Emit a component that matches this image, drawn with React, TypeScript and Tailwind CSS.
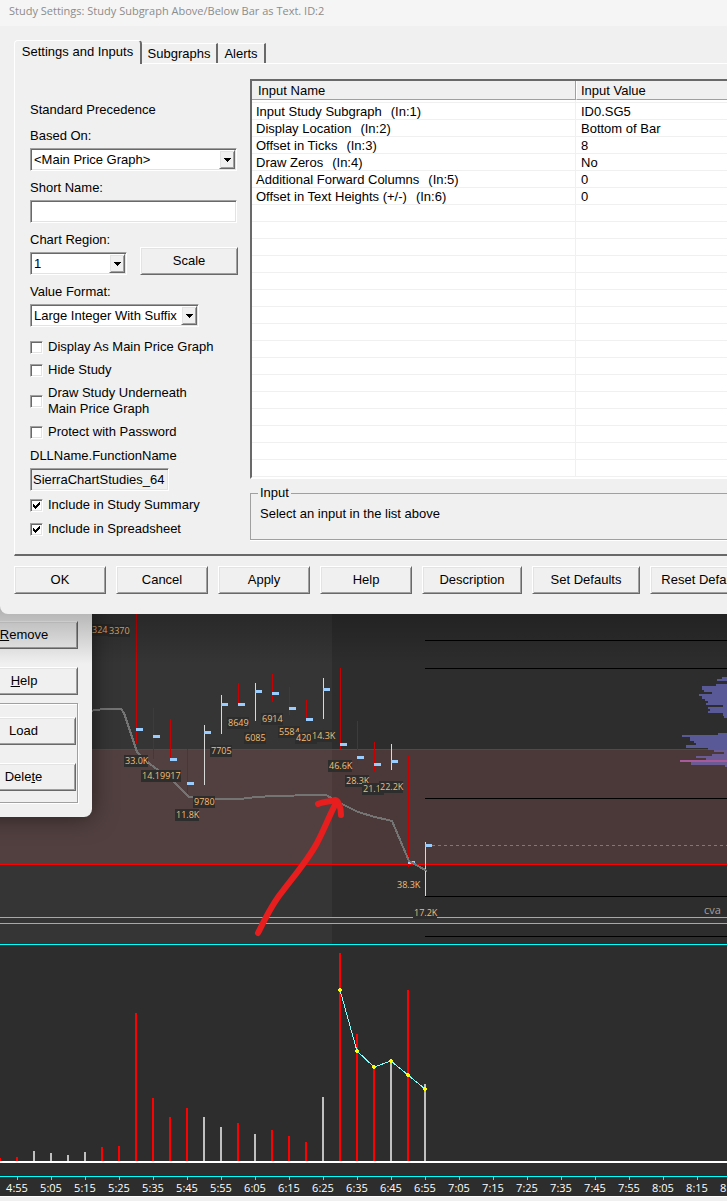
import { useState } from "react";
import type { ReactNode } from "react";

// --- Shared bevel styles ---
const RAISED =
  "border border-t-white border-l-white border-r-[#696969] border-b-[#696969] bg-[#f0f0f0] shadow-[inset_1px_1px_0_#e3e3e3,inset_-1px_-1px_0_#a0a0a0]";
const SUNKEN =
  "border border-t-[#a0a0a0] border-l-[#a0a0a0] border-r-white border-b-white shadow-[inset_1px_1px_0_#696969,inset_-1px_-1px_0_#e3e3e3]";

const INPUT_ROWS = [
  { name: "Input Study Subgraph", id: "(In:1)", value: "ID0.SG5" },
  { name: "Display Location", id: "(In:2)", value: "Bottom of Bar" },
  { name: "Offset in Ticks", id: "(In:3)", value: "8" },
  { name: "Draw Zeros", id: "(In:4)", value: "No" },
  { name: "Additional Forward Columns", id: "(In:5)", value: "0" },
  { name: "Offset in Text Heights (+/-)", id: "(In:6)", value: "0" },
];
const EMPTY_ROWS = 16;

// --- Chart data ---
const BAR_STEP = 17;
const RED = "#c80000";
const WHITE = "#d8d8d8";

type PriceBar = { x: number; high: number; low: number; close: number; up?: boolean };

const PRICE_BARS: PriceBar[] = [
  { x: 136, high: 0, low: 144, close: 129 },
  { x: 153, high: 108, low: 159, close: 136 },
  { x: 170, high: 119, low: 158, close: 159 },
  { x: 187, high: 149, low: 194, close: 183 },
  { x: 204, high: 125, low: 185, close: 132, up: true },
  { x: 221, high: 95, low: 134, close: 104, up: true },
  { x: 238, high: 83, low: 104, close: 104 },
  { x: 255, high: 83, low: 121, close: 91, up: true },
  { x: 272, high: 74, low: 102, close: 93 },
  { x: 289, high: 87, low: 115, close: 108 },
  { x: 306, high: 100, low: 119, close: 119 },
  { x: 323, high: 78, low: 119, close: 89, up: true },
  { x: 340, high: 68, low: 149, close: 144 },
  { x: 357, high: 121, low: 164, close: 157 },
  { x: 374, high: 142, low: 172, close: 164 },
  { x: 391, high: 144, low: 170, close: 161, up: true },
  { x: 408, high: 155, low: 267, close: 262 },
  { x: 425, high: 242, low: 296, close: 245, up: true },
];

const PRICE_LABELS = [
  { x: 91, y: 30, text: "324" },
  { x: 108, y: 31, text: "3370" },
  { x: 124, y: 161, text: "33.0K" },
  { x: 141, y: 176, text: "14.1" },
  { x: 159, y: 176, text: "9917" },
  { x: 175, y: 215, text: "11.8K" },
  { x: 193, y: 202, text: "9780" },
  { x: 210, y: 151, text: "7705" },
  { x: 227, y: 123, text: "8649" },
  { x: 244, y: 138, text: "6085" },
  { x: 261, y: 119, text: "6914" },
  { x: 278, y: 132, text: "5584" },
  { x: 295, y: 138, text: "420" },
  { x: 311, y: 136, text: "14.3K" },
  { x: 328, y: 166, text: "46.6K" },
  { x: 345, y: 181, text: "28.3K" },
  { x: 362, y: 189, text: "21.1" },
  { x: 379, y: 187, text: "22.2K" },
  { x: 396, y: 285, text: "38.3K" },
  { x: 413, y: 313, text: "17.2K" },
];

// [y, height, width] measured from the right edge
const PROFILE = [
  [77, 2, 5], [79, 2, 10], [84, 2, 11], [86, 4, 25], [90, 2, 23], [92, 2, 15],
  [94, 2, 28], [96, 3, 25], [99, 2, 22], [101, 2, 19], [103, 2, 21], [105, 2, 4],
  [107, 2, 19], [109, 2, 17], [111, 2, 19], [113, 3, 4], [116, 2, 3],
  [133, 2, 9], [135, 2, 45], [137, 4, 37], [141, 2, 33], [143, 2, 31], [145, 3, 41],
  [148, 2, 19], [150, 2, 13], [152, 2, 3], [154, 2, 15], [156, 2, 31], [158, 2, 21],
  [162, 3, 36], [165, 2, 2],
];

// [top, rising] for every bar, starting at x = 0
const VOLUME: [number, boolean][] = [
  [213, false], [212, false], [206, true], [208, true], [210, true], [207, true],
  [202, false], [201, false], [68, false], [153, false], [172, false], [163, false],
  [172, true], [182, true], [178, false], [189, true], [185, false], [191, false],
  [197, false], [152, true], [8, false], [89, false], [122, false], [116, true],
  [45, false], [139, true],
];
const VOLUME_AVG = [[340, 45], [357, 106], [374, 122], [391, 116], [408, 130], [425, 144]];

const TIMES = Array.from({ length: 22 }, (_, i) => {
  const minutes = 4 * 60 + 55 + i * 10;
  return `${Math.floor(minutes / 60)}:${String(minutes % 60).padStart(2, "0")}`;
});

// --- Controls ---
function Button({ children, className = "w-[92px]" }: { children: ReactNode; className?: string }) {
  return (
    <button type="button" className={`h-7 shrink-0 whitespace-nowrap text-center ${RAISED} ${className}`}>
      {children}
    </button>
  );
}

function Select({ id, label, value, className }: { id: string; label: string; value: string; className: string }) {
  return (
    <div>
      <label htmlFor={id} className="mb-1 block">{label}</label>
      <div className={`relative h-[23px] ${className}`}>
        <select id={id} defaultValue={value} className={`h-full w-full appearance-none bg-white pl-[3px] ${SUNKEN}`}>
          <option>{value}</option>
        </select>
        <span className={`pointer-events-none absolute inset-y-[2px] right-[2px] flex w-4 items-center justify-center ${RAISED}`}>
          <svg width="7" height="4" shapeRendering="crispEdges"><path d="M0 0H7V1H6V2H5V3H4V4H3V3H2V2H1V1H0Z" /></svg>
        </span>
      </div>
    </div>
  );
}

function Checkbox({ label, initial = false }: { label: ReactNode; initial?: boolean }) {
  const [checked, setChecked] = useState(initial);
  return (
    <label className="flex items-center gap-[5px]">
      <span className="relative size-[13px] shrink-0">
        <input
          type="checkbox"
          checked={checked}
          onChange={(e) => setChecked(e.target.checked)}
          className={`block size-full appearance-none bg-white ${SUNKEN}`}
        />
        {checked && (
          <svg className="pointer-events-none absolute inset-0" width="13" height="13" shapeRendering="crispEdges">
            <path d="M3 5H4V6H5V7H6V6H7V5H8V4H9V3H10V6H9V7H8V8H7V9H6V10H5V9H4V8H3Z" />
          </svg>
        )}
      </span>
      <span>{label}</span>
    </label>
  );
}

// --- Dialog ---
function Tabs() {
  const idle = "h-5 border-t border-r-2 border-t-white border-r-[#696969] text-center";
  return (
    <div role="tablist" className="relative z-10 -mb-px ml-[14px] flex items-end">
      <button type="button" role="tab" aria-selected="true" className="h-6 w-32 rounded-t-sm border-t border-r-2 border-l border-t-white border-l-white border-r-[#696969] bg-[#f0f0f0] pb-[2px]">
        Settings and Inputs
      </button>
      <button type="button" role="tab" aria-selected="false" className={`mb-px w-[76px] ${idle}`}>Subgraphs</button>
      <button type="button" role="tab" aria-selected="false" className={`mb-px w-12 ${idle}`}>Alerts</button>
    </div>
  );
}

function SettingsForm() {
  return (
    <div className="w-[235px] shrink-0 pt-[38px] pb-[17px] pl-[15px]">
      <p className="mb-[10px]">Standard Precedence</p>
      <div className="flex flex-col gap-[9px]">
        <Select id="based-on" label="Based On:" value="<Main Price Graph>" className="w-[207px]" />
        <div>
          <label htmlFor="short-name" className="mb-1 block">Short Name:</label>
          <input id="short-name" className={`block h-[23px] w-[207px] bg-white px-1 ${SUNKEN}`} />
        </div>
        <div className="flex items-end gap-[13px]">
          <Select id="region" label="Chart Region:" value="1" className="w-[97px]" />
          <Button className="w-[98px]">Scale</Button>
        </div>
        <Select id="format" label="Value Format:" value="Large Integer With Suffix" className="w-[169px]" />
      </div>
      <div className="mt-3 flex flex-col gap-[7px]">
        <Checkbox label="Display As Main Price Graph" />
        <Checkbox label="Hide Study" />
        <Checkbox label={<>Draw Study Underneath<br />Main Price Graph</>} />
        <Checkbox label="Protect with Password" />
      </div>
      <label htmlFor="dll" className="mt-2 mb-1 block">DLLName.FunctionName</label>
      <input id="dll" readOnly defaultValue="SierraChartStudies_64" className={`block h-[23px] w-[139px] bg-[#f0f0f0] px-[2px] ${SUNKEN}`} />
      <div className="mt-[6px] flex flex-col gap-2">
        <Checkbox label="Include in Study Summary" initial />
        <Checkbox label="Include in Spreadsheet" initial />
      </div>
    </div>
  );
}

function InputList() {
  return (
    <div className="min-w-0 grow pt-[15px]">
      <div className="border-t-2 border-b-2 border-l-2 border-t-[#696969] border-b-white border-l-[#696969] bg-white">
        <table className="w-full table-fixed border-separate border-spacing-0 text-left">
          <thead className="bg-[#f0f0f0]">
            <tr className="h-[19px]">
              <th className="w-[324px] border-r border-b border-[#a0a0a0] pt-[2px] pl-[6px] font-normal">Input Name</th>
              <th className="border-b border-l border-b-[#a0a0a0] border-l-white pt-[2px] pl-1 font-normal">Input Value</th>
            </tr>
          </thead>
          <tbody>
            <tr className="h-[3px]">
              <td className="border-r border-b border-[#f0f0f0]" />
              <td className="border-b border-[#f0f0f0]" />
            </tr>
            {INPUT_ROWS.map((row) => (
              <tr key={row.id} className="h-[17px] leading-[14px]">
                <td className="border-r border-b border-[#f0f0f0] pt-[2px] pl-1">
                  {row.name}<span className="ml-[9px]">{row.id}</span>
                </td>
                <td className="border-b border-[#f0f0f0] pt-[2px] pl-[5px]">{row.value}</td>
              </tr>
            ))}
            {Array.from({ length: EMPTY_ROWS }, (_, i) => (
              <tr key={i} className="h-[17px]">
                <td className="border-r border-b border-[#f0f0f0]" />
                <td className="border-b border-[#f0f0f0]" />
              </tr>
            ))}
          </tbody>
        </table>
      </div>
      <fieldset className="mt-[6px] h-[55px] border border-r-0 border-[#a0a0a0] pl-[9px] shadow-[0_1px_0_#fff]">
        <legend className="-ml-[2px] px-[2px]">Input</legend>
        <p className="mt-[5px]">Select an input in the list above</p>
      </fieldset>
    </div>
  );
}

function StudyDialog() {
  return (
    <section className="relative z-20 overflow-hidden rounded-bl-lg bg-[#f0f0f0]">
      <header className="h-[26px] bg-[#f5f5f5] pl-[9px]">
        <h1 className="font-['Open_Sans',sans-serif] text-[11px] leading-[22px] whitespace-nowrap text-[#8c8c8c]">
          Study Settings: Study Subgraph Above/Below Bar as Text. ID:2
        </h1>
      </header>
      <div className="pt-[14px]">
        <Tabs />
        <div className="ml-[14px] flex border-t border-b-2 border-l border-t-white border-b-[#696969] border-l-white">
          <SettingsForm />
          <InputList />
        </div>
      </div>
      <footer className="flex gap-[10px] pt-[10px] pb-5 pl-[14px]">
        <Button>OK</Button>
        <Button>Cancel</Button>
        <Button>Apply</Button>
        <Button>Help</Button>
        <Button className="w-[100px]">Description</Button>
        <Button className="w-[108px]">Set Defaults</Button>
        <Button className="w-[108px]">Reset Defaults</Button>
      </footer>
    </section>
  );
}

function StudiesWindow() {
  return (
    <aside className="absolute top-0 -left-10 z-10 flex w-[132px] flex-col gap-[18px] rounded-br-lg bg-[#f0f0f0] pt-[21px] pr-[14px] pb-[14px] pl-[10px] shadow-[0_0_24px_rgba(0,0,0,0.5)]">
      <Button className="w-[108px]"><u>R</u>emove</Button>
      <Button className="w-[108px]"><u>H</u>elp</Button>
      <div className="-mt-[10px] flex flex-col gap-[18px] border border-[#a0a0a0] pt-[13px] pr-px pb-[11px] shadow-[1px_1px_0_#fff,inset_1px_1px_0_#fff]">
        <Button className="w-full">Load</Button>
        <Button className="w-full">Dele<u>t</u>e</Button>
      </div>
    </aside>
  );
}

// --- Charts ---
function PriceChart() {
  return (
    <svg className="block h-[345px] w-full" shapeRendering="crispEdges">
      <rect width="100%" height="345" fill="#2d2d2d" />
      <rect width="332" height="345" fill="#353535" />
      <rect y="149" width="100%" height="115" fill="#4b3939" />
      <rect y="149" width="332" height="115" fill="#524040" />
      <rect y="318" width="100%" height="5" fill="#353535" />
      <rect y="149" width="100%" height="1" fill="#d81010" />
      <rect y="264" width="100%" height="1" fill="#ff0000" />
      <rect y="317" width="100%" height="1" fill="#a8a8a8" />
      <rect y="323" width="100%" height="1" fill="#a8a8a8" />
      {[40, 68, 198, 296, 336].map((y) => (
        <rect key={y} x="425" y={y} width="100%" height="1" fill="#000" />
      ))}
      <line x1="432" y1="245.5" x2="100%" y2="245.5" stroke="#857676" strokeDasharray="3 3" />

      <svg x="100%" overflow="visible">
        {PROFILE.map(([y, h, w]) => (
          <rect key={y} x={-w} y={y} width={w} height={h} fill={y < 149 ? "#595997" : "#6b5b94"} />
        ))}
        <rect x="-47" y="160" width="47" height="2" fill="#a85a9a" />
      </svg>

      {PRICE_BARS.map((b) => (
        <g key={b.x}>
          <rect x={b.x} y={b.high} width="1" height={b.low - b.high} fill={b.up ? WHITE : RED} />
          <rect x={b.x} y={b.close - 1} width="7" height="3" fill="#99ccff" />
        </g>
      ))}
      <polyline
        points="90,111 103,109 121,109 124,113 137,152 150,164 175,183 189,197 212,199 240,199 256,197 275,196 315,195 326,195 342,204 358,212 375,217 392,221 409,261 427,271"
        fill="none"
        stroke="#747474"
        strokeWidth="2"
      />
      {PRICE_LABELS.map((l) => (
        <g key={l.x}>
          <rect x={l.x} y={l.y - 6} width={l.text.length > 4 ? 24 : 22} height="12" fill="#2d2d2d" />
          <text x={l.x + 1} y={l.y + 3} fill="#f5bd72" className="font-['Open_Sans',sans-serif] text-[9px]">{l.text}</text>
        </g>
      ))}
      <text x="704" y="314" fill="#a0a0a0" className="font-['Open_Sans',sans-serif] text-[11px]">cva</text>

      <g fill="none" stroke="#e81e1e" strokeWidth="6" strokeLinecap="round" strokeLinejoin="round" shapeRendering="auto">
        <path d="M258 333C265 319 272 304 282 292C294 276 308 260 317 243C324 230 329 216 336 203" />
        <path d="M318 204C324 201 331 202 335 200C339 201 341 208 341 215" />
      </g>
      <rect y="344" width="100%" height="1" fill="#00ffff" />
    </svg>
  );
}

function VolumeChart() {
  return (
    <svg className="block h-[231px] w-full bg-[#2d2d2d]" shapeRendering="crispEdges">
      {VOLUME.map(([top, up], i) => (
        <rect key={i} x={i * BAR_STEP - 1} y={top} width="2" height={216 - top} fill={up ? "#c0c0c0" : "#ff0000"} />
      ))}
      <rect y="216" width="100%" height="2" fill="#fff" />
      <polyline points={VOLUME_AVG.map((p) => p.join(",")).join(" ")} fill="none" stroke="#80ffff" />
      {VOLUME_AVG.map(([x, y]) => (
        <path key={x} d={`M${x - 1} ${y - 2}h2v1h1v2h-1v1h-2v-1h-1v-2h1z`} fill="#ffff00" />
      ))}
    </svg>
  );
}

function TimeAxis() {
  return (
    <div className="flex h-5 overflow-hidden border-t border-[#00ffff] bg-[#2d2d2d] font-['Open_Sans',sans-serif] text-[11px] leading-4 text-white">
      {TIMES.map((t) => (
        <div key={t} className="flex w-[34px] shrink-0 flex-col items-center">
          <span className="h-[3px] w-px shrink-0 bg-[#00ffff]" />
          <span>{t}</span>
        </div>
      ))}
    </div>
  );
}

export default function App() {
  return (
    <main className="relative overflow-hidden bg-[#f0f0f0] font-['Liberation_Sans',Arial,sans-serif] text-[13px] leading-4 text-black">
      <StudyDialog />
      <div className="relative -mt-[14px]">
        <StudiesWindow />
        {/* soft shadow the dialog throws on everything below it */}
        <div className="pointer-events-none absolute inset-x-0 top-0 z-10 h-16 bg-linear-to-b from-black/30 to-transparent" />
        <PriceChart />
        <VolumeChart />
        <TimeAxis />
      </div>
      <div className="h-[5px] border-t border-white" />
    </main>
  );
}
